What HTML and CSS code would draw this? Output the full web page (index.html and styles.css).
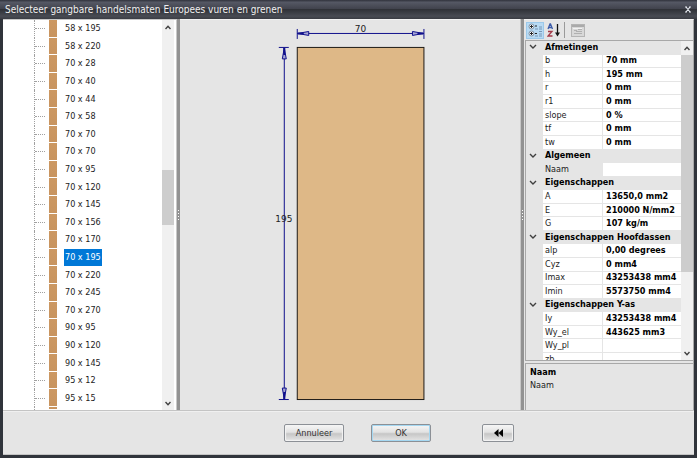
FILE: index.html
```html
<!DOCTYPE html>
<html lang="nl">
<head>
<meta charset="utf-8">
<title>Selecteer gangbare handelsmaten Europees vuren en grenen</title>
<link rel="stylesheet" href="styles.css">
</head>
<body>
<div class="window">
  <header class="titlebar">
    <h1>Selecteer gangbare handelsmaten Europees vuren en grenen</h1>
    <button class="close" type="button" aria-label="Sluiten"><svg width="6" height="7" viewBox="0 0 6 7"><path d="M0 1h2M4 1h2M0 6h2M4 6h2M1 1l4 5M5 1l-4 5" stroke="#e4e8ee" stroke-width="1.2"/></svg></button>
  </header>
  <main class="panes">
    <section class="tree-pane">
      <ul class="tree" role="tree">
        <li role="treeitem"><span>58 x 195</span></li>
        <li role="treeitem"><span>58 x 220</span></li>
        <li role="treeitem"><span>70 x 28</span></li>
        <li role="treeitem"><span>70 x 40</span></li>
        <li role="treeitem"><span>70 x 44</span></li>
        <li role="treeitem"><span>70 x 58</span></li>
        <li role="treeitem"><span>70 x 70</span></li>
        <li role="treeitem"><span>70 x 70</span></li>
        <li role="treeitem"><span>70 x 95</span></li>
        <li role="treeitem"><span>70 x 120</span></li>
        <li role="treeitem"><span>70 x 145</span></li>
        <li role="treeitem"><span>70 x 156</span></li>
        <li role="treeitem"><span>70 x 170</span></li>
        <li role="treeitem" aria-selected="true"><span>70 x 195</span></li>
        <li role="treeitem"><span>70 x 220</span></li>
        <li role="treeitem"><span>70 x 245</span></li>
        <li role="treeitem"><span>70 x 270</span></li>
        <li role="treeitem"><span>90 x 95</span></li>
        <li role="treeitem"><span>90 x 120</span></li>
        <li role="treeitem"><span>90 x 145</span></li>
        <li role="treeitem"><span>95 x 12</span></li>
        <li role="treeitem"><span>95 x 15</span></li>
        <li class="cut" role="presentation"></li>
      </ul>
      <div class="scrollbar tree-scroll">
        <button type="button" aria-label="Omhoog"><svg width="6" height="5" viewBox="0 0 6 5"><path d="M.5 4L3 1.2 5.5 4" class="chev"/></svg></button>
        <div class="track"><div class="thumb"></div></div>
        <button type="button" aria-label="Omlaag"><svg width="6" height="5" viewBox="0 0 6 5"><path d="M.5 1L3 3.8 5.5 1" class="chev"/></svg></button>
      </div>
    </section>
    <div class="splitter"><i></i><i></i><i></i><i></i></div>
    <section class="drawing">
      <svg viewBox="0 0 341 391" role="img" aria-label="Doorsnede 70 x 195">
        <rect x="117.5" y="27.5" width="127" height="353" fill="#deb887" stroke="#1e1a16"/>
        <g stroke="#10108c" fill="none">
          <path d="M117.5 9v10M244.5 9v10M117.5 13.5h127M99 27.5h10M99 380.5h10M104.500 28v352"/>
          <path d="M118 13.5l11-2v4zM244 13.5l-11-2v4zM104.5 28l-2 11h4zM104.500 380l-2-11h4z" fill="#a5a5d5"/>
          <path d="M118 13.5h6M244 13.5h-6M104.5 28v7M104.5 380v-7" stroke-width="2"/>
        </g>
        <text x="181" y="12">70</text>
        <text x="104" y="203">195</text>
      </svg>
    </section>
    <div class="splitter"><i></i><i></i><i></i><i></i></div>
    <aside class="props">
      <div class="toolbar">
        <button class="active" type="button" aria-label="Op categorie"><svg width="14" height="14" viewBox="0 0 14 14"><g fill="#f4f8fb" stroke="#7e8fa0"><circle cx="3.5" cy="3.5" r="2.5"/><circle cx="3.5" cy="10.5" r="2.5"/></g><path d="M2 3.500h3M3.500 2v3M2 10.500h3M3.500 9v3M7 3h2M7 10.500h2" stroke="#222"/><path d="M7 6h3M11 4h3M11 6h3M7 13h3M11 11h3M11 13h3M11 8.500h3" stroke="#7897b5"/></svg></button>
        <button type="button" aria-label="Alfabetisch"><svg width="13" height="14" viewBox="0 0 13 14"><path d="M1 6l2-5h.5l2 5M2 4.500h3" fill="none" stroke="#3a5aa8" stroke-width="1.3"/><path d="M1 8.500h4L1 13h4.500" fill="none" stroke="#a33a48" stroke-width="1.3"/><path d="M10.500 1v10" stroke="#111" stroke-width="1.3"/><path d="M8 9.500h5L10.500 13.500z" fill="#111"/></svg></button>
        <span class="divider"></span>
        <button type="button" disabled aria-label="Eigenschappenpagina's"><svg width="14" height="13" viewBox="0 0 14 13"><rect x=".5" y=".5" width="13" height="12" fill="#d8d8d8" stroke="#b4b4b4"/><path d="M1 2h12" stroke="#aaa" stroke-width="2"/><path d="M3 6.500h3M7 5.500h4M3 9.500h8M5 7.500h6" stroke="#b0b0b0"/><path d="M2 4.500h9" stroke="#f2f2f2"/></svg></button>
      </div>
      <div class="grid">
        <table>
          <tbody>
            <tr class="cat"><th colspan="2"><svg width="8" height="6" viewBox="0 0 8 6"><path d="M1 1l3 3 3-3" class="chev"/></svg>Afmetingen</th></tr>
            <tr><th>b</th><td>70 mm</td></tr>
            <tr><th>h</th><td>195 mm</td></tr>
            <tr><th>r</th><td>0 mm</td></tr>
            <tr><th>r1</th><td>0 mm</td></tr>
            <tr><th>slope</th><td>0 %</td></tr>
            <tr><th>tf</th><td>0 mm</td></tr>
            <tr><th>tw</th><td>0 mm</td></tr>
            <tr class="cat"><th colspan="2"><svg width="8" height="6" viewBox="0 0 8 6"><path d="M1 1l3 3 3-3" class="chev"/></svg>Algemeen</th></tr>
            <tr class="current"><th>Naam</th><td></td></tr>
            <tr class="cat"><th colspan="2"><svg width="8" height="6" viewBox="0 0 8 6"><path d="M1 1l3 3 3-3" class="chev"/></svg>Eigenschappen</th></tr>
            <tr><th>A</th><td>13650,0 mm2</td></tr>
            <tr><th>E</th><td>210000 N/mm2</td></tr>
            <tr><th>G</th><td>107 kg/m</td></tr>
            <tr class="cat"><th colspan="2"><svg width="8" height="6" viewBox="0 0 8 6"><path d="M1 1l3 3 3-3" class="chev"/></svg>Eigenschappen Hoofdassen</th></tr>
            <tr><th>alp</th><td>0,00 degrees</td></tr>
            <tr><th>Cyz</th><td>0 mm4</td></tr>
            <tr><th>Imax</th><td>43253438 mm4</td></tr>
            <tr><th>Imin</th><td>5573750 mm4</td></tr>
            <tr class="cat"><th colspan="2"><svg width="8" height="6" viewBox="0 0 8 6"><path d="M1 1l3 3 3-3" class="chev"/></svg>Eigenschappen Y-as</th></tr>
            <tr><th>Iy</th><td>43253438 mm4</td></tr>
            <tr><th>Wy_el</th><td>443625 mm3</td></tr>
            <tr><th>Wy_pl</th><td></td></tr>
            <tr class="cut"><th>zb</th><td></td></tr>
          </tbody>
        </table>
        <div class="scrollbar grid-scroll">
          <button type="button" aria-label="Omhoog"><svg width="6" height="5" viewBox="0 0 6 5"><path d="M.5 4L3 1.2 5.5 4" class="chev"/></svg></button>
          <div class="track"><div class="thumb"></div></div>
          <button type="button" aria-label="Omlaag"><svg width="6" height="5" viewBox="0 0 6 5"><path d="M.5 1L3 3.8 5.5 1" class="chev"/></svg></button>
        </div>
      </div>
      <div class="help"><strong>Naam</strong><p>Naam</p></div>
    </aside>
  </main>
  <footer class="actions">
    <button type="button">Annuleer</button>
    <button type="button" class="default">OK</button>
    <button type="button" class="collapse" aria-label="Inklappen"><svg width="9" height="8" viewBox="0 0 9 8"><path d="M4.500 0v8L0 4zM9 0v8L4.500 4z" fill="#000"/></svg></button>
  </footer>
</div>
</body>
</html>
```
FILE: styles.css
```css
* { box-sizing: border-box; }
body {
  margin: 0;
  font: 9px/13px "DejaVu Sans Condensed", "DejaVu Sans", sans-serif;
  color: #1c1c1c;
}
button {
  display: flex;
  align-items: center;
  justify-content: center;
  padding: 0;
  border: 0;
  background: none;
  color: inherit;
  font: inherit;
}
svg { display: block; }
.chev { fill: none; stroke: #404040; stroke-width: 1.4; }

.window {
  height: 100vh;
  display: flex;
  flex-direction: column;
  padding: 0 3px 3px;
  background: #30343b;
}
.titlebar {
  flex: 0 0 19px;
  display: flex;
  align-items: center;
  justify-content: space-between;
  margin: 0 -3px;
  padding: 0 6px 0 5px;
  background: linear-gradient(#30323c, #555864 12%, #42444e 45%, #303238 50%, #484b53 85%, #3a3c43);
  color: #f0f0f0;
}
.titlebar h1 { margin: 0; font-size: 10px; line-height: 16px; font-weight: 400; white-space: nowrap; }

.panes { flex: 1; min-height: 0; display: flex; background: #e5e5e5; border-bottom: 1px solid #c4c4c4; }

.tree-pane { flex: 0 0 25%; display: flex; background: #fff; border-top: 1px solid #c8c8c8; padding-right: 2px; }
.tree { flex: 1; display: flex; flex-direction: column; list-style: none; margin: 0; padding: 0 0 0 31px; }
.tree li {
  flex: 1;
  min-height: 0;
  display: flex;
  align-items: center;
  border-left: 1px dotted #a0a0a0;
  background: linear-gradient(#cc9862, #c8945f) 14px 0 / 8px calc(100% - 1px) no-repeat;
}
.tree li::before { content: ""; width: 10px; border-top: 1px dotted #a0a0a0; }
.tree span { display: flex; align-items: center; height: 100%; padding: 0 1px; margin-left: 19px; }
.tree li[aria-selected] span { background: #0078d7; color: #fff; }
.tree li.cut { flex: 0 0 3px; overflow: hidden; }
.tree li.cut::before { visibility: hidden; }

.scrollbar { flex: 0 0 12px; display: flex; flex-direction: column; background: #f0f0f0; }
.scrollbar button { flex: 0 0 14px; width: 100%; }
.track { flex: 1; display: flex; flex-direction: column; }
.thumb { background: #cdcdcd; }
.tree-scroll .track { padding-top: 136px; }
.tree-scroll .thumb { flex: 0 0 55px; }
.grid-scroll .thumb { flex: 0 0 217px; }

.splitter {
  flex: 0 0 4px;
  display: flex;
  flex-direction: column;
  align-items: center;
  justify-content: center;
  gap: 2px;
  background: #929292;
  border-left: 1px solid #c8c8c8;
}
.splitter i { width: 1px; height: 1px; background: #fff; }
.drawing { flex: 1; min-width: 0; border-top: 1px solid #f2f2f2; }
.drawing svg { width: 100%; height: 100%; }
.drawing text { font-family: "DejaVu Sans", sans-serif; text-anchor: middle; fill: #222; }

.props {
  flex: 0 0 170px;
  min-width: 0;
  display: flex;
  flex-direction: column;
  padding-left: 1px;
  border-right: 1px solid #a8a8a8;
  border-top: 1px solid #f2f2f2;
}
.toolbar { flex: 0 0 20px; display: flex; align-items: center; padding-left: 1px; }
.toolbar button { width: 18px; height: 17px; }
.toolbar .active { background: #b8daf3; outline: 1px solid #9cc9ea; outline-offset: -1px; }
.toolbar button:disabled { width: 22px; }
.divider { width: 1px; height: 16px; margin: 0 2px; background: #9a9a9a; }

.grid { flex: 1; min-height: 0; display: flex; border: 1px solid #a8a8a8; border-right: 0; }
table { flex: 1; min-width: 0; display: flex; flex-direction: column; padding-left: 17px; }
tbody { flex: 1; min-height: 0; display: flex; flex-direction: column; }
tr { flex: 1; min-height: 0; display: flex; background: #fff; border-bottom: 1px solid #e5e5e5; }
th, td { padding: 0; display: flex; align-items: center; white-space: nowrap; }
th { flex: 0 0 60px; padding-left: 2px; font-weight: 400; border-right: 1px solid #e5e5e5; }
td { flex: 1; min-width: 0; padding-left: 3px; font-weight: 700; color: #000; }
.cat { background: #e5e5e5; margin-left: -17px; }
.cat th { flex: 1; padding-left: 3px; gap: 8px; font-weight: 700; color: #000; }
.current th { background: #e5e5e5; }
tr.cut { flex: 0 0 7px; overflow: hidden; border: 0; }
tr.cut th { align-items: flex-start; }

.help { flex: 0 0 47px; margin-top: 2px; padding: 2px 4px; border: 1px solid #a8a8a8; border-width: 1px 0 0 1px; }
.help strong { display: block; color: #000; }
.help p { margin: 0; }

.actions {
  flex: 0 0 44px;
  display: flex;
  align-items: center;
  justify-content: flex-end;
  padding-right: 180px;
  background: #e5e5e5;
  border-top: 1px solid #f0f0f0;
  border-bottom: 1px solid #c4c4c4;
}
.actions button {
  width: 60px;
  height: 18px;
  margin-right: 27px;
  border: 1px solid #8c9096;
  border-radius: 2px;
  background: linear-gradient(#f6f6f6, #e2e2e2 45%, #c6c6c6 55%, #e6e6e6);
  box-shadow: inset 0 0 1px 1px #f4f4f4;
  color: #333;
}
.actions .default { margin-right: 51px; box-shadow: inset 0 0 0 1px #a5d8f2; }
.actions .collapse { width: 32px; margin-right: 0; }
```
